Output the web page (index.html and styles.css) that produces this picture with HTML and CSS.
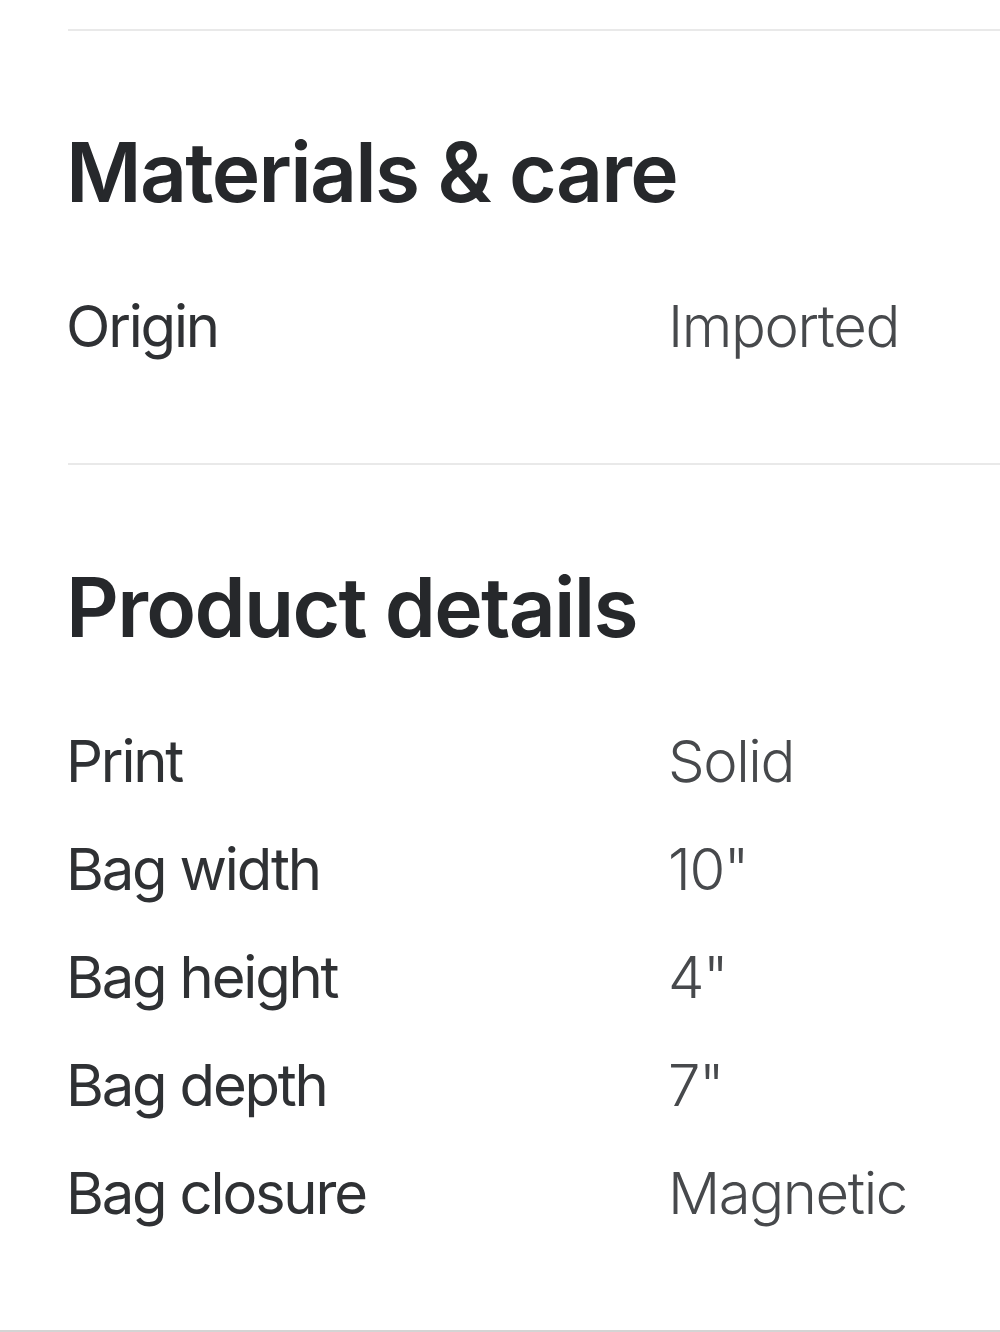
FILE: index.html
```html
<!DOCTYPE html>
<html lang="en">
<head>
<meta charset="utf-8">
<title>Product details</title>
<link rel="stylesheet" href="styles.css">
</head>
<body>
<div class="page">
  <section class="section">
    <h2 class="section-title">Materials &amp; care</h2>
    <dl class="specs">
      <div class="spec"><dt>Origin</dt><dd>Imported</dd></div>
    </dl>
  </section>
  <section class="section">
    <h2 class="section-title">Product details</h2>
    <dl class="specs">
      <div class="spec"><dt>Print</dt><dd>Solid</dd></div>
      <div class="spec"><dt>Bag width</dt><dd>10"</dd></div>
      <div class="spec"><dt>Bag height</dt><dd>4"</dd></div>
      <div class="spec"><dt>Bag depth</dt><dd>7"</dd></div>
      <div class="spec"><dt>Bag closure</dt><dd>Magnetic</dd></div>
    </dl>
  </section>
</div>
</body>
</html>
```
FILE: styles.css
```css
html, body {
  margin: 0;
  padding: 0;
  background: #ffffff;
}
body {
  font-family: Inter, "Noto Sans", "Liberation Sans", sans-serif;
  color: #2b2d30;
}
.page {
  height: 1332px;
  box-sizing: border-box;
  padding-top: 29px;
  padding-left: 68px;
  border-bottom: 2px solid #d4d4d4;
}
.section {
  border-top: 2px solid #e9e9e9;
  padding-top: 92px;
  padding-bottom: 83px;
}
.section + .section {
  padding-top: 93px;
}
.section-title {
  margin: 0 0 49px -2px;
  font-size: 82px;
  line-height: 100px;
  font-weight: 600;
  color: #26282b;
  letter-spacing: -1.7px;
}
.specs {
  margin: 0;
}
.spec {
  display: grid;
  grid-template-columns: 602px 1fr;
  font-size: 58px;
  line-height: 108px;
}
.spec dt {
  margin-left: -2px;
  color: #2f3134;
  letter-spacing: -2.2px;
}
.spec dd {
  margin: 0 0 0 -2px;
  color: #47494c;
  font-weight: 300;
  letter-spacing: -1.4px;
}
```
